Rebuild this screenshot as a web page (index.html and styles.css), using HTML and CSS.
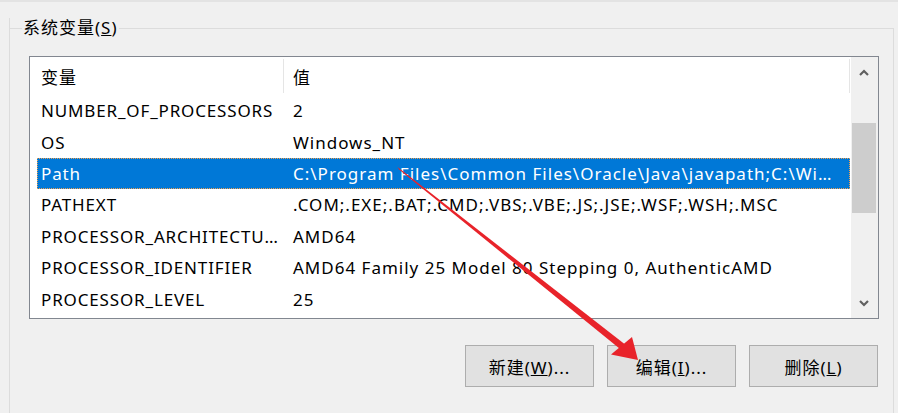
FILE: index.html
```html
<!DOCTYPE html>
<html lang="zh-CN">
<head>
<meta charset="utf-8">
<title>系统变量</title>
<link rel="stylesheet" href="styles.css">
</head>
<body>
<div class="top-edge"></div>
<div class="dialog">
  <fieldset class="group">
    <legend class="group-title">系统变量(<u>S</u>)</legend>
    <div class="listbox">
      <div class="list-main">
        <div class="list-header">
          <div class="hcell hname">变量</div>
          <div class="hcell hvalue">值</div>
        </div>
        <div class="row"><div class="cname">NUMBER_OF_PROCESSORS</div><div class="cvalue">2</div></div>
        <div class="row"><div class="cname">OS</div><div class="cvalue">Windows_NT</div></div>
        <div class="row selected"><div class="cname">Path</div><div class="cvalue">C:\Program Files\Common Files\Oracle\Java\javapath;C:\Windows\system32;C:\Windows;C:\Windows\System32\Wbem</div></div>
        <div class="row"><div class="cname">PATHEXT</div><div class="cvalue">.COM;.EXE;.BAT;.CMD;.VBS;.VBE;.JS;.JSE;.WSF;.WSH;.MSC</div></div>
        <div class="row"><div class="cname">PROCESSOR_ARCHITECTURE</div><div class="cvalue">AMD64</div></div>
        <div class="row"><div class="cname">PROCESSOR_IDENTIFIER</div><div class="cvalue">AMD64 Family 25 Model 80 Stepping 0, AuthenticAMD</div></div>
        <div class="row"><div class="cname">PROCESSOR_LEVEL</div><div class="cvalue">25</div></div>
      </div>
      <div class="vscroll">
        <div class="sbtn">
          <svg width="10" height="7" viewBox="0 0 10 7"><path d="M1 6 L5 2 L9 6" fill="none" stroke="#606060" stroke-width="2.2"/></svg>
        </div>
        <div class="track"><div class="thumb"></div></div>
        <div class="sbtn">
          <svg width="10" height="7" viewBox="0 0 10 7"><path d="M1 1 L5 5 L9 1" fill="none" stroke="#606060" stroke-width="2.2"/></svg>
        </div>
      </div>
    </div>
    <div class="buttons">
      <button class="btn">新建(<u>W</u>)...</button>
      <button class="btn">编辑(<u>I</u>)...</button>
      <button class="btn">删除(<u>L</u>)</button>
    </div>
  </fieldset>
</div>
<svg class="annotation" width="898" height="413" viewBox="0 0 898 413">
  <polygon points="397.5,167 399,169.5 625,353 629,347.5" fill="#e8232a"/>
  <polygon points="638,360 611,354.5 632,337" fill="#e8232a"/>
</svg>
</body>
</html>
```

FILE: styles.css
```css
* { box-sizing: border-box; }

html, body {
  margin: 0;
  padding: 0;
}

body {
  width: 898px;
  height: 413px;
  position: relative;
  overflow: hidden;
  background: #f0f0f0;
  font-family: "Noto Sans", "Noto Sans CJK SC", sans-serif;
  font-size: 17px;
  letter-spacing: 1px;
  color: #000;
}

.top-edge {
  height: 2px;
  background: #e3e3e3;
}

.dialog {
  margin-left: 9px;
  height: 411px;
  border-left: 1px solid #dcdcdc;
}

.group {
  margin: 16px 4px 0 0;
  padding: 18px 14px 0 19px;
  border: 1px solid #dcdcdc;
  border-left: none;
  height: 397px;
  min-width: 0;
}

.group-title {
  margin-left: -7px;
  padding: 0 1px;
  line-height: 20px;
  font-size: 17px;
}

.listbox {
  height: 263px;
  border: 1px solid #828790;
  background: #fff;
  display: flex;
}

.list-main {
  width: 821px;
  overflow: hidden;
}

.list-header {
  height: 38px;
  display: flex;
  padding: 2px 0;
}

.hcell {
  display: flex;
  align-items: center;
  border-right: 1px solid #e5e5e5;
}

.hname {
  width: 254px;
  padding-left: 11px;
}

.hvalue {
  width: 566px;
  padding-left: 9px;
}

.row {
  height: 31.4px;
  margin-left: 7px;
  display: flex;
  align-items: center;
  white-space: nowrap;
}

.cname {
  width: 246px;
  padding: 0 4px 0 4px;
  letter-spacing: 0.85px;
  overflow: hidden;
  text-overflow: ellipsis;
}

.cvalue {
  flex: 1;
  min-width: 0;
  padding: 0 15px 0 10px;
  overflow: hidden;
  text-overflow: ellipsis;
}

.row.selected {
  background: #0078d7;
  color: #fff;
  outline: 1px dotted #f0a050;
  outline-offset: -1px;
}

.vscroll {
  width: 27px;
  margin-left: 1px;
  background: #f0f0f0;
  display: flex;
  flex-direction: column;
}

.sbtn {
  height: 30px;
  display: flex;
  align-items: center;
  justify-content: center;
  padding-right: 1px;
}

.track {
  flex: 1;
}

.thumb {
  margin: 36px 2px 0 1px;
  height: 90px;
  background: #cdcdcd;
}

.buttons {
  margin-top: 26px;
  padding-right: 1px;
  display: flex;
  justify-content: flex-end;
  gap: 13px;
}

.btn {
  width: 129px;
  height: 42px;
  border: 1px solid #adadad;
  background: #e1e1e1;
  font-family: inherit;
  font-size: 17px;
  letter-spacing: 1px;
  color: #000;
  padding: 0;
}

.annotation {
  position: absolute;
  left: 0;
  top: 0;
  pointer-events: none;
}
```
